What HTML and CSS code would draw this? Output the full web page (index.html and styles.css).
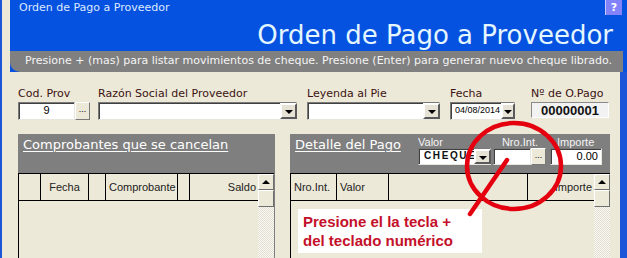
FILE: index.html
```html
<!DOCTYPE html>
<html lang="es">
<head>
<meta charset="utf-8">
<title>Orden de Pago a Proveedor</title>
<link rel="stylesheet" href="styles.css">
</head>
<body>
<div class="win">
  <header class="head">
    <div class="head-row">
      <span class="small-title">Orden de Pago a Proveedor</span>
      <span class="help">?</span>
    </div>
    <h1 class="big-title">Orden de Pago a Proveedor</h1>
    <div class="hint">Presione + (mas) para listar movimientos de cheque. Presione (Enter) para generar nuevo cheque librado.</div>
  </header>

  <main class="main">
    <div class="fields">
      <div class="field f-cod">
        <label>Cod. Prov</label>
        <div class="ctl">
          <div class="input center">9</div>
          <div class="dots">...</div>
        </div>
      </div>
      <div class="field f-razon">
        <label>Razón Social del Proveedor</label>
        <div class="ctl">
          <div class="input grow"></div>
          <div class="arrow"><span class="tri"></span></div>
        </div>
      </div>
      <div class="field f-ley">
        <label>Leyenda al Pie</label>
        <div class="ctl">
          <div class="input grow"></div>
          <div class="arrow"><span class="tri"></span></div>
        </div>
      </div>
      <div class="field f-fecha">
        <label>Fecha</label>
        <div class="ctl">
          <div class="input grow date">04/08/2014</div>
          <div class="arrow sm"><span class="tri"></span></div>
        </div>
      </div>
      <div class="field f-num">
        <label>Nº de O.Pago</label>
        <div class="numbox">00000001</div>
      </div>
    </div>

    <div class="panels">
      <section class="panel p-left">
        <div class="ptop">
          <h2 class="ptitle">Comprobantes que se cancelan</h2>
        </div>
        <div class="grid">
          <div class="table">
            <div class="thead">
              <div class="th" style="width:22px"></div>
              <div class="th c" style="width:48px">Fecha</div>
              <div class="th" style="width:17px"></div>
              <div class="th c" style="width:72px">Comprobante</div>
              <div class="th" style="width:12px"></div>
              <div class="th r last">Saldo</div>
            </div>
            <div class="tbody"></div>
          </div>
          <div class="scroll">
            <div class="sbtn"><span class="up"></span></div>
            <div class="sthumb"></div>
            <div class="strack"></div>
          </div>
        </div>
      </section>

      <section class="panel p-right">
        <div class="ptop">
          <h2 class="ptitle">Detalle del Pago</h2>
          <div class="pfields">
            <div class="pf pf-valor">
              <span class="plabel">Valor</span>
              <div class="ctl h17">
                <div class="input grow cheque">CHEQUE</div>
                <div class="arrow"><span class="tri"></span></div>
              </div>
            </div>
            <div class="pf pf-nro">
              <span class="plabel r">Nro.Int.</span>
              <div class="ctl h17">
                <div class="input grow"></div>
                <div class="dots">...</div>
              </div>
            </div>
            <div class="pf pf-imp">
              <span class="plabel">Importe</span>
              <div class="ctl h17">
                <div class="input grow right">0.00</div>
              </div>
            </div>
          </div>
        </div>
        <div class="grid">
          <div class="table">
            <div class="thead">
              <div class="th" style="width:46px">Nro.Int.</div>
              <div class="th" style="width:52px">Valor</div>
              <div class="th" style="width:139px"></div>
              <div class="th r last">Importe</div>
            </div>
            <div class="tbody"></div>
          </div>
          <div class="scroll">
            <div class="sbtn"><span class="up"></span></div>
            <div class="sthumb"></div>
            <div class="strack"></div>
          </div>
        </div>
      </section>
    </div>
  </main>

  <div class="note">Presione el la tecla +<br>del teclado numérico</div>
  <svg class="mark" width="627" height="258" viewBox="0 0 627 258">
    <ellipse cx="514" cy="166" rx="47" ry="43" fill="none" stroke="#e4000f" stroke-width="4.5"/>
    <line x1="507" y1="160" x2="470" y2="214" stroke="#e4000f" stroke-width="4.5" stroke-linecap="round"/>
  </svg>
</div>
</body>
</html>
```
FILE: styles.css
```css
* { box-sizing: border-box; }
html, body { margin: 0; padding: 0; }
body {
  width: 627px;
  height: 258px;
  overflow: hidden;
  background: #ece9d8;
  font-family: "DejaVu Sans", sans-serif;
}
.win {
  position: relative;
  width: 627px;
  height: 258px;
  display: flex;
  flex-direction: column;
  background: #ece9d8;
  border-left: 2px solid #1d55d8;
  overflow: hidden;
}

/* header */
.head {
  margin-left: 8px;
  background: #0652e0;
  display: flex;
  flex-direction: column;
}
.head-row {
  height: 16px;
  display: flex;
  justify-content: space-between;
  align-items: flex-start;
  padding-left: 9px;
  padding-right: 5px;
}
.small-title {
  color: #dce9ff;
  font-size: 11px;
  line-height: 15px;
}
.help {
  width: 17px;
  height: 15px;
  background: #8282fa;
  color: #fff;
  font-weight: bold;
  font-size: 11px;
  line-height: 15px;
  text-align: center;
  border-left: 1px solid #c8c8ff;
}
.big-title {
  margin: 0;
  height: 35px;
  text-align: right;
  padding: 4px 14px 0 0;
  color: #e4f6ff;
  font-weight: normal;
  font-size: 26px;
  line-height: 31px;
}
.hint {
  height: 21px;
  margin-right: 4px;
  background: #808080;
  border-bottom-left-radius: 10px;
  color: #f4f4f4;
  font-size: 11px;
  line-height: 20px;
  text-align: center;
  padding-left: 4px;
  white-space: nowrap;
}

/* main */
.main {
  flex: 1;
  display: flex;
  flex-direction: column;
  padding: 14px 0 0 16px;
  border-right: 7px solid #1d55d8;
}
.fields {
  display: flex;
  align-items: flex-start;
  height: 48px;
}
.field { display: flex; flex-direction: column; }
.field label {
  color: #3c1212;
  font-size: 11px;
  line-height: 16px;
  height: 16px;
  white-space: nowrap;
}
.f-cod { width: 72px; }
.f-razon { width: 199px; margin-left: 8px; }
.f-ley { width: 133px; margin-left: 10px; }
.f-fecha { width: 65px; margin-left: 10px; }
.f-num { width: 78px; margin-left: 16px; }

.ctl { display: flex; height: 18px; }
.ctl.h17 { height: 17px; }
.input {
  background: #fff;
  border: 1px solid;
  border-color: #7a7a7a #e8e6de #e8e6de #7a7a7a;
  box-shadow: inset 1px 1px 0 #404040;
  font-family: "Liberation Sans", Arial, sans-serif;
  font-size: 11px;
  line-height: 15px;
  color: #000;
  width: 57px;
  padding: 0 3px;
  white-space: nowrap;
  overflow: hidden;
}
.input.grow { flex: 1; width: auto; }
.input.center { text-align: center; }
.input.right { text-align: right; }
.input.date { font-size: 9px; line-height: 15px; padding-left: 4px; }
.input.cheque {
  font-size: 10px;
  font-weight: bold;
  letter-spacing: 1.6px;
  line-height: 14px;
  padding-left: 5px;
  color: #111;
}
.dots {
  width: 15px;
  background: #ece9d8;
  border: 1px solid;
  border-color: #fff #7a7a7a #7a7a7a #fff;
  font-size: 9px;
  line-height: 12px;
  text-align: center;
  color: #000;
  font-family: "Liberation Sans", Arial, sans-serif;
}
.arrow {
  width: 17px;
  margin-left: -17px;
  background: #e6e3d6;
  border: 2px solid;
  border-color: #fff #5a5a5a #5a5a5a #fff;
  display: flex;
  align-items: center;
  justify-content: center;
  position: relative;
  top: 1px;
  height: 16px;
}
.ctl.h17 .arrow { height: 15px; }
.arrow.sm { width: 14px; margin-left: -14px; }
.tri {
  width: 0; height: 0;
  border-left: 4px solid transparent;
  border-right: 4px solid transparent;
  border-top: 4px solid #000;
  margin-top: 2px;
}
.numbox {
  height: 16px;
  background: #f2f2f2;
  border: 1px solid;
  border-color: #8a8a8a #fff #fff #8a8a8a;
  font-family: "Liberation Sans", Arial, sans-serif;
  font-weight: bold;
  font-size: 13px;
  line-height: 15px;
  text-align: center;
  color: #111;
}

/* panels */
.panels {
  display: flex;
  gap: 15px;
  flex: 1;
}
.panel {
  background: #7f7f7f;
  display: flex;
  flex-direction: column;
}
.p-left { width: 257px; padding-right: 1px; }
.p-right { width: 320px; }
.ptop {
  height: 39px;
  display: flex;
  align-items: flex-start;
}
.ptitle {
  margin: 0;
  padding: 3px 0 0 5px;
  color: #fff;
  font-weight: normal;
  font-size: 13px;
  line-height: 16px;
  text-decoration: underline;
  text-underline-offset: 2px;
  white-space: nowrap;
}
.pfields {
  display: flex;
  gap: 2px;
  width: 184px;
  margin-left: auto;
  margin-right: 8px;
  padding-top: 2px;
}
.pf { display: flex; flex-direction: column; }
.plabel {
  color: #f4f4f4;
  font-family: "Liberation Sans", Arial, sans-serif;
  font-size: 11px;
  line-height: 12px;
  height: 12px;
  white-space: nowrap;
}
.plabel.r { text-align: right; padding-right: 8px; }
.pf-valor { width: 73px; }
.pf-nro { width: 53px; }
.pf-imp { width: 52px; margin-left: 2px; padding-left: 7px; }
.pf-imp .ctl { margin-left: -7px; }

.grid {
  flex: 1;
  display: flex;
  border-top: 1px solid #000;
  border-left: 1px solid #000;
  background: #ece9d8;
}
.table { flex: 1; display: flex; flex-direction: column; }
.thead {
  display: flex;
  height: 27px;
  border-bottom: 1px solid #000;
  background: #ece9d8;
}
.th {
  border-right: 1px solid #000;
  font-family: "Liberation Sans", Arial, sans-serif;
  font-size: 11px;
  line-height: 26px;
  color: #222;
  padding: 0 3px;
  white-space: nowrap;
  overflow: hidden;
}
.th.c { text-align: center; }
.th.r { text-align: right; }
.th.last { flex: 1; border-right: 0; padding-right: 2px; }
.tbody { flex: 1; background: #ece9d8; }
.scroll {
  width: 16px;
  display: flex;
  flex-direction: column;
}
.sbtn, .sthumb {
  height: 16px;
  background: #ece9d8;
  border: 1px solid;
  border-color: #fff #6e6e6e #6e6e6e #fff;
  display: flex;
  align-items: center;
  justify-content: center;
}
.sthumb { height: 17px; }
.up {
  width: 0; height: 0;
  border-left: 4px solid transparent;
  border-right: 4px solid transparent;
  border-bottom: 4px solid #000;
}
.strack {
  flex: 1;
  background-color: #f6f4ec;
  background-image: repeating-conic-gradient(#e2dfd2 0 25%, #faf9f4 0 50%);
  background-size: 2px 2px;
}

/* annotation */
.note {
  position: absolute;
  left: 296px;
  top: 209px;
  width: 184px;
  height: 44px;
  background: #fff;
  color: #c4102a;
  font-family: "Liberation Sans", Arial, sans-serif;
  font-weight: bold;
  font-size: 15px;
  line-height: 19px;
  padding: 3px 0 0 5px;
  white-space: nowrap;
}
.mark {
  position: absolute;
  left: -2px;
  top: 0;
  pointer-events: none;
}
```
